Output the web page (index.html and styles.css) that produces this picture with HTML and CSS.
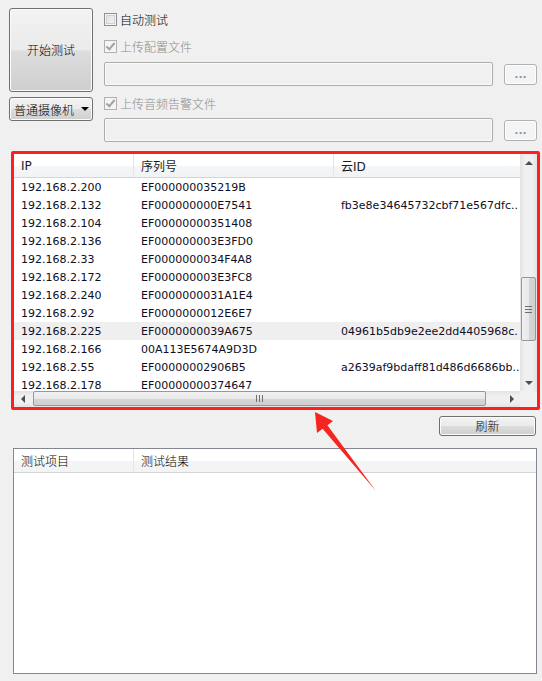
FILE: index.html
```html
<!DOCTYPE html>
<html lang="zh-CN">
<head>
    <meta charset="UTF-8">
    <meta name="viewport" content="width=device-width, initial-scale=1.0">
    <title>设备测试</title>
    <link rel="stylesheet" href="styles.css">
</head>
<body>

<div class="window">
    <div class="top">
        <div class="left-col">
            <button class="btn start">开始测试</button>
            <div class="combo">普通摄像机<span class="caret"></span></div>
        </div>

        <div class="right-col">
            <label class="check-row"><span class="box"></span>自动测试</label>
            <label class="check-row disabled"><span class="box checked"></span>上传配置文件</label>
            <div class="file-row">
                <div class="field"></div>
                <button class="btn dots">...</button>
            </div>
            <label class="check-row disabled second"><span class="box checked"></span>上传音频告警文件</label>
            <div class="file-row">
                <div class="field"></div>
                <button class="btn dots">...</button>
            </div>
        </div>
    </div>

    <div class="device-panel">
        <div class="list-view">
            <div class="list-main">
                <div class="head">
                    <div class="cell">IP</div>
                    <div class="cell">序列号</div>
                    <div class="cell">云ID</div>
                </div>
                <div class="rows">
                    <div class="row"><div class="cell">192.168.2.200</div><div class="cell">EF000000035219B</div><div class="cell"></div></div>
                    <div class="row"><div class="cell">192.168.2.132</div><div class="cell">EF000000000E7541</div><div class="cell">fb3e8e34645732cbf71e567dfc..</div></div>
                    <div class="row"><div class="cell">192.168.2.104</div><div class="cell">EF00000000351408</div><div class="cell"></div></div>
                    <div class="row"><div class="cell">192.168.2.136</div><div class="cell">EF000000003E3FD0</div><div class="cell"></div></div>
                    <div class="row"><div class="cell">192.168.2.33</div><div class="cell">EF0000000034F4A8</div><div class="cell"></div></div>
                    <div class="row"><div class="cell">192.168.2.172</div><div class="cell">EF000000003E3FC8</div><div class="cell"></div></div>
                    <div class="row"><div class="cell">192.168.2.240</div><div class="cell">EF0000000031A1E4</div><div class="cell"></div></div>
                    <div class="row"><div class="cell">192.168.2.92</div><div class="cell">EF0000000012E6E7</div><div class="cell"></div></div>
                    <div class="row hover"><div class="cell">192.168.2.225</div><div class="cell">EF0000000039A675</div><div class="cell">04961b5db9e2ee2dd4405968c.</div></div>
                    <div class="row"><div class="cell">192.168.2.166</div><div class="cell">00A113E5674A9D3D</div><div class="cell"></div></div>
                    <div class="row"><div class="cell">192.168.2.55</div><div class="cell">EF00000002906B5</div><div class="cell">a2639af9bdaff81d486d6686bb..</div></div>
                    <div class="row"><div class="cell">192.168.2.178</div><div class="cell">EF00000000374647</div><div class="cell"></div></div>
                </div>
            </div>

            <div class="vscroll">
                <div class="arrow-btn"><span class="tri up"></span></div>
                <div class="track">
                    <div class="thumb v"><span class="grip v"></span></div>
                </div>
                <div class="arrow-btn"><span class="tri down"></span></div>
            </div>
        </div>

        <div class="hscroll-row">
            <div class="hscroll">
                <div class="arrow-btn"><span class="tri left"></span></div>
                <div class="track">
                    <div class="thumb h"><span class="grip h"></span></div>
                </div>
                <div class="arrow-btn"><span class="tri right"></span></div>
            </div>
            <div class="corner"></div>
        </div>
    </div>

    <div class="refresh-row">
        <button class="btn refresh">刷新</button>
    </div>

    <div class="result-list">
        <div class="head">
            <div class="cell">测试项目</div>
            <div class="cell">测试结果</div>
        </div>
    </div>

    <!-- annotation arrow drawn over the screenshot -->
    <svg class="callout" width="542" height="681" viewBox="0 0 542 681">
        <polygon points="315,412 333,421 327.4,425.2 376,491 322.6,428.8 317,433" fill="#f5251f"/>
    </svg>
</div>

</body>
</html>
```

FILE: styles.css
```css
* {
    box-sizing: border-box;
}

body {
    margin: 0;
    background-color: #f0f0f0;
    font-family: "Noto Sans CJK SC", "DejaVu Sans", sans-serif;
    font-size: 12px;
    font-weight: 300;
    color: #000;
}

.window {
    position: relative;
    width: 542px;
    height: 681px;
    overflow: hidden;
}

/* ---------- top controls ---------- */

.top {
    display: flex;
    padding: 8px 0 0 9px;
}

.left-col {
    width: 84px;
}

.btn {
    font-family: "Noto Sans CJK SC", sans-serif;
    font-size: 12px;
    font-weight: 300;
    color: #000;
    border: 1px solid #707070;
    border-radius: 3px;
    background: linear-gradient(to bottom, #f2f2f2 0%, #ebebeb 50%, #dddddd 51%, #cfcfcf 100%);
    box-shadow: inset 0 0 0 1px #fcfcfc;
    padding: 0;
    line-height: 1;
}

.start {
    width: 84px;
    height: 84px;
}

.combo {
    display: flex;
    align-items: center;
    justify-content: space-between;
    margin-top: 5px;
    height: 24px;
    padding: 0 3px 0 4px;
    border: 1px solid #707070;
    border-radius: 3px;
    background: linear-gradient(to bottom, #f2f2f2 0%, #ebebeb 50%, #dddddd 51%, #cfcfcf 100%);
    box-shadow: inset 0 0 0 1px #fcfcfc;
    font-size: 12px;
}

.caret {
    width: 0;
    height: 0;
    border-left: 4px solid transparent;
    border-right: 4px solid transparent;
    border-top: 4px solid #000;
}

.right-col {
    margin-left: 11px;
    width: 433px;
    padding-top: 2px;
}

.check-row {
    display: flex;
    align-items: center;
    height: 18px;
    font-size: 12px;
}

.check-row + .check-row {
    margin-top: 9px;
}

.check-row.second {
    margin-top: 8px;
}

.check-row.disabled {
    color: #8d8d8d;
}

.box {
    position: relative;
    width: 13px;
    height: 13px;
    margin-right: 3px;
    border: 1px solid #8e8f8f;
    background: linear-gradient(135deg, #dcdcdc, #f7f7f7);
    box-shadow: inset 0 0 0 1px #f4f4f4, inset 0 0 0 2px #d0d0d0;
}

.disabled .box {
    border-color: #b1b1b1;
    background: #f4f4f4;
    box-shadow: none;
}

.box.checked::after {
    content: "";
    position: absolute;
    left: 3px;
    top: 0;
    width: 3px;
    height: 7px;
    border-right: 2px solid #a2a2a2;
    border-bottom: 2px solid #a2a2a2;
    transform: rotate(40deg);
}

.file-row {
    display: flex;
    align-items: center;
    margin-top: 7px;
    height: 24px;
}

.check-row.second + .file-row {
    margin-top: 6px;
}

.field {
    width: 389px;
    height: 24px;
    border: 1px solid #adadad;
    border-radius: 2px;
    background-color: #f0f0f0;
    box-shadow: inset 0 0 0 1px #f9f9f9;
}

.dots {
    margin-left: 11px;
    width: 33px;
    height: 21px;
    border-color: #adb2b5;
    background: #f4f4f4;
    color: #8a9bb0;
    font-family: "DejaVu Sans", sans-serif;
    font-weight: bold;
    font-size: 11px;
}

/* ---------- device list ---------- */

.device-panel {
    margin: 9px 0 0 11px;
    width: 529px;
    height: 259px;
    border: 3px solid #ff1d1d;
    border-radius: 2px;
    background-color: #fff;
}

.list-view {
    display: flex;
    height: 237px;
}

.list-main {
    width: 506px;
    overflow: hidden;
}

.head {
    display: grid;
    grid-template-columns: 120px 200px 186px;
    height: 24px;
    align-items: center;
    background: linear-gradient(to bottom, #ffffff 0%, #ffffff 50%, #f4f5f7 51%, #f2f3f5 100%);
    border-bottom: 1px solid #d5d5d5;
}

.head .cell {
    height: 100%;
    display: flex;
    align-items: center;
    padding-left: 7px;
    border-right: 1px solid #e3e5e8;
    font-family: "DejaVu Sans", "Noto Sans CJK SC", sans-serif;
    font-size: 12px;
    font-weight: normal;
    color: #1b1b1b;
}

.head .cell:last-child {
    border-right: none;
}

.rows {
    height: 213px;
    overflow: hidden;
}

.row {
    display: grid;
    grid-template-columns: 120px 200px 186px;
    height: 18px;
    align-items: center;
    font-family: "DejaVu Sans", sans-serif;
    font-size: 11px;
    font-weight: normal;
    color: #0e0e24;
}

.row.hover {
    background-color: #efefef;
}

.row .cell {
    padding-left: 7px;
    white-space: nowrap;
    overflow: hidden;
}

/* ---------- scrollbars ---------- */

.vscroll {
    display: flex;
    flex-direction: column;
    width: 17px;
    background: linear-gradient(to right, #e3e3e3, #f0f0f0 30%, #f0f0f0 70%, #e3e3e3);
}

.hscroll-row {
    display: flex;
    height: 16px;
}

.hscroll {
    display: flex;
    width: 506px;
    background: linear-gradient(to bottom, #e3e3e3, #f0f0f0 30%, #f0f0f0 70%, #e3e3e3);
}

.corner {
    width: 17px;
    background-color: #f0f0f0;
}

.arrow-btn {
    display: flex;
    align-items: center;
    justify-content: center;
    width: 17px;
    height: 17px;
    flex-shrink: 0;
}

.hscroll .arrow-btn {
    height: 16px;
}

.vscroll .track {
    flex: 1;
    padding-top: 106px;
}

.hscroll .track {
    flex: 1;
    display: flex;
    padding-left: 2px;
}

.thumb {
    display: flex;
    align-items: center;
    justify-content: center;
    border: 1px solid #979797;
    border-radius: 2px;
}

.thumb.v {
    width: 15px;
    height: 64px;
    margin-left: 1px;
    background: linear-gradient(to right, #f1f1f1, #e8e8e8 50%, #d6d6d6 51%, #cfcfcf);
}

.thumb.h {
    width: 453px;
    height: 15px;
    background: linear-gradient(to bottom, #f1f1f1, #e8e8e8 50%, #d6d6d6 51%, #cfcfcf);
}

.grip.v {
    width: 7px;
    height: 7px;
    border-top: 1px solid #6f6f6f;
    border-bottom: 1px solid #6f6f6f;
    background: linear-gradient(to bottom, transparent 2px, #6f6f6f 2px, #6f6f6f 3px, transparent 3px);
}

.grip.h {
    width: 7px;
    height: 7px;
    border-left: 1px solid #6f6f6f;
    border-right: 1px solid #6f6f6f;
    background: linear-gradient(to right, transparent 2px, #6f6f6f 2px, #6f6f6f 3px, transparent 3px);
}

.tri {
    width: 0;
    height: 0;
}

.tri.up {
    border-left: 4px solid transparent;
    border-right: 4px solid transparent;
    border-bottom: 4px solid #4d4d4d;
}

.tri.down {
    border-left: 4px solid transparent;
    border-right: 4px solid transparent;
    border-top: 4px solid #4d4d4d;
}

.tri.left {
    border-top: 4px solid transparent;
    border-bottom: 4px solid transparent;
    border-right: 4px solid #4d4d4d;
}

.tri.right {
    border-top: 4px solid transparent;
    border-bottom: 4px solid transparent;
    border-left: 4px solid #4d4d4d;
}

/* ---------- bottom area ---------- */

.refresh-row {
    display: flex;
    justify-content: flex-end;
    padding-right: 6px;
    margin-top: 6px;
}

.refresh {
    width: 97px;
    height: 20px;
}

.result-list {
    margin: 12px 0 0 13px;
    width: 524px;
    height: 226px;
    border: 1px solid #828790;
    background-color: #fff;
}

.result-list .head {
    grid-template-columns: 120px 1fr;
    height: 24px;
}

.result-list .head .cell {
    font-family: "Noto Sans CJK SC", sans-serif;
    font-size: 12px;
    font-weight: 300;
    color: #000;
}

.callout {
    position: absolute;
    left: 0;
    top: 0;
    pointer-events: none;
}
```
